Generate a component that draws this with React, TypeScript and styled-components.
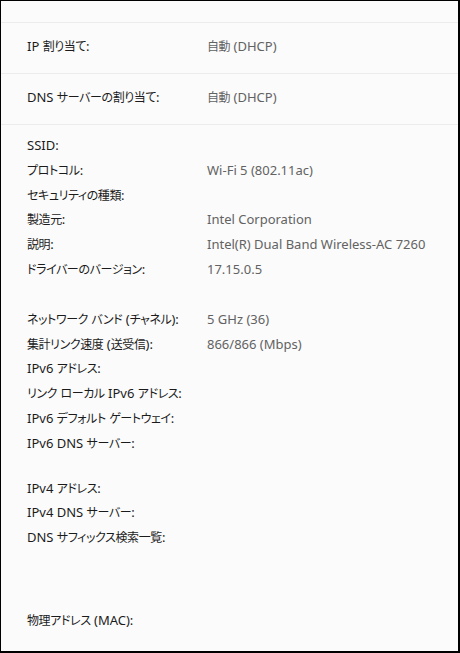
import React from 'react';
import styled, { createGlobalStyle } from 'styled-components';

const GlobalStyle = createGlobalStyle`
    html, body {
        margin: 0;
        padding: 0;
        background: #fbfbfb;
    }
`;

const Frame = styled.div`
    width: 460px;
    height: 653px;
    box-sizing: border-box;
    border-top: 1px solid #000;
    border-left: 1px solid #000;
    border-right: 2px solid #000;
    border-bottom: 2px solid #000;
    background: #fbfbfb;
    overflow: hidden;
    font-family: 'Segoe UI', 'Noto Sans', 'Noto Sans CJK JP', sans-serif;
    font-size: 13px;
    font-feature-settings: 'palt';
    color: #1b1b1b;
`;

const TopSpacer = styled.div`
    height: 21px;
    border-bottom: 1px solid #ececec;
`;

const SettingRow = styled.div`
    height: 51px;
    display: grid;
    grid-template-columns: 180px 1fr;
    align-items: center;
    padding-left: 26px;
    padding-bottom: 5px;
    box-sizing: border-box;
    border-bottom: 1px solid #ececec;
`;

const Details = styled.div`
    padding: 8px 0 0 26px;
`;

interface GroupProps {
    gap: number;
}

const Group = styled.div<GroupProps>`
    margin-top: ${(p) => p.gap}px;
`;

const Line = styled.div`
    display: grid;
    grid-template-columns: 180px 1fr;
    height: 24.8px;
    line-height: 24.8px;
    white-space: nowrap;
`;

const Label = styled.span`
    color: #1b1b1b;
`;

const Value = styled.span`
    color: #626262;
`;

// Japanese runs are set a little tighter, like Yu Gothic UI
const Jp = styled.span`
    font-family: 'Noto Sans CJK JP', sans-serif;
    font-size: 12px;
    letter-spacing: -0.4px;
`;

const jpPattern = /([\u3000-\u30ff\u4e00-\u9fff\uff00-\uffef]+)/;

const Text: React.FC<{ children: string }> = ({ children }) => (
    <>
        {children.split(jpPattern).map((part, i) =>
            jpPattern.test(part) ? <Jp key={i}>{part}</Jp> : part
        )}
    </>
);

type Item = [string, string];

const groups: { gap: number; items: Item[] }[] = [
    {
        gap: 0,
        items: [
            ['SSID:', ''],
            ['プロトコル:', 'Wi-Fi 5 (802.11ac)'],
            ['セキュリティの種類:', ''],
            ['製造元:', 'Intel Corporation'],
            ['説明:', 'Intel(R) Dual Band Wireless-AC 7260'],
            ['ドライバーのバージョン:', '17.15.0.5'],
        ],
    },
    {
        gap: 25,
        items: [
            ['ネットワーク バンド (チャネル):', '5 GHz (36)'],
            ['集計リンク速度 (送受信):', '866/866 (Mbps)'],
            ['IPv6 アドレス:', ''],
            ['リンク ローカル IPv6 アドレス:', ''],
            ['IPv6 デフォルト ゲートウェイ:', ''],
            ['IPv6 DNS サーバー:', ''],
        ],
    },
    {
        gap: 20,
        items: [
            ['IPv4 アドレス:', ''],
            ['IPv4 DNS サーバー:', ''],
            ['DNS サフィックス検索一覧:', ''],
        ],
    },
    {
        gap: 58,
        items: [['物理アドレス (MAC):', '']],
    },
];

const App: React.FC = () => {
    return (
        <>
            <GlobalStyle />
            <Frame>
                <TopSpacer />
                <SettingRow>
                    <Label><Text>IP 割り当て:</Text></Label>
                    <Value><Text>自動 (DHCP)</Text></Value>
                </SettingRow>
                <SettingRow>
                    <Label><Text>DNS サーバーの割り当て:</Text></Label>
                    <Value><Text>自動 (DHCP)</Text></Value>
                </SettingRow>
                <Details>
                    {groups.map((g, i) => (
                        <Group key={i} gap={g.gap}>
                            {g.items.map(([label, value]) => (
                                <Line key={label}>
                                    <Label><Text>{label}</Text></Label>
                                    <Value>{value}</Value>
                                </Line>
                            ))}
                        </Group>
                    ))}
                </Details>
            </Frame>
        </>
    );
};

export default App;
